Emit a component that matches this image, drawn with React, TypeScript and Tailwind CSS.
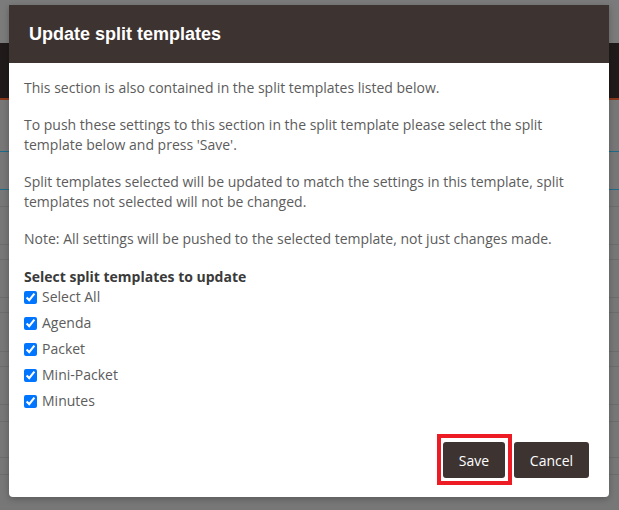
import React from "react";

const rows = [
  "h-[52px] border-b border-[#1d6b8a]",
  "h-[38px] border-b border-[#1d6b8a]",
  "h-[17px] border-b border-[#6c6c6c]",
  "h-[38px] border-b border-[#6c6c6c]",
  "h-[15px] border-b border-[#6c6c6c]",
  "h-[38px] border-b border-[#6c6c6c]",
  "h-[15px] border-b border-[#6c6c6c]",
  "h-[39px] border-b border-[#6c6c6c]",
  "h-[15px] border-b border-[#6c6c6c]",
  "h-[38px] border-b border-[#6c6c6c]",
  "h-[17px] border-b border-[#6c6c6c]",
  "h-[36px] border-b border-[#6c6c6c]",
  "h-[17px] border-b border-[#6c6c6c]",
];

const items = ["Select All", "Agenda", "Packet", "Mini-Packet", "Minutes"];

export default function App() {
  return (
    <div className="relative w-[619px] h-[510px] overflow-hidden bg-[#777777]" style={{ fontFamily: '"Open Sans", sans-serif' }}>
      {/* dimmed page behind */}
      <div className="h-[43px] bg-[#7b7b7b]" />
      <div className="h-[55px] bg-[#201b1a]" />
      <div className="h-[2px] bg-[#8a3a1c]" />
      <div className="flex flex-col">
        {rows.map((c, i) => (
          <div key={i} className={c} />
        ))}
      </div>

      {/* modal */}
      <div className="absolute left-[9px] top-[5px] w-[600px] h-[492px] bg-white rounded-b-[4px] shadow-[0_2px_6px_rgba(0,0,0,0.25)] flex flex-col">
        <div className="h-[58px] bg-[#3d3432] flex items-center px-5">
          <h1
            className="text-white font-bold text-[18px] leading-none"
            style={{ fontFamily: '"Liberation Sans", Arial, sans-serif' }}
          >
            Update split templates
          </h1>
        </div>
        <div className="px-[15px] pt-[15px] text-[14px] leading-[20px] text-[#5c5c5c]">
          <p className="mb-[17px]">This section is also contained in the split templates listed below.</p>
          <p className="mb-[17px]">
            To push these settings to this section in the split template please select the split template below and press 'Save'.
          </p>
          <p className="mb-[17px]">
            Split templates selected will be updated to match the settings in this template, split templates not selected will not be changed.
          </p>
          <p className="mb-[18px]">Note: All settings will be pushed to the selected template, not just changes made.</p>
          <div className="font-bold text-[#3a3a3a]">Select split templates to update</div>
          <div className="flex flex-col gap-[6px]">
            {items.map((it) => (
              <label key={it} className="flex items-center h-5">
                <input type="checkbox" defaultChecked className="m-0 mr-[5px] w-[13px] h-[13px]" />
                <span>{it}</span>
              </label>
            ))}
          </div>
        </div>
        <div className="mt-auto flex justify-end gap-[9px] pr-5 pb-[19px]">
          <div className="relative">
            <button className="h-[36px] w-[62px] rounded-[3px] bg-[#3d3432] text-white text-[14px]">Save</button>
            <div className="absolute -left-[6px] -top-[8px] -right-[7px] -bottom-[7px] border-[4px] border-[#ed1c24] pointer-events-none" />
          </div>
          <button className="h-[36px] w-[75px] rounded-[3px] bg-[#3d3432] text-white text-[14px]">Cancel</button>
        </div>
      </div>
    </div>
  );
}
